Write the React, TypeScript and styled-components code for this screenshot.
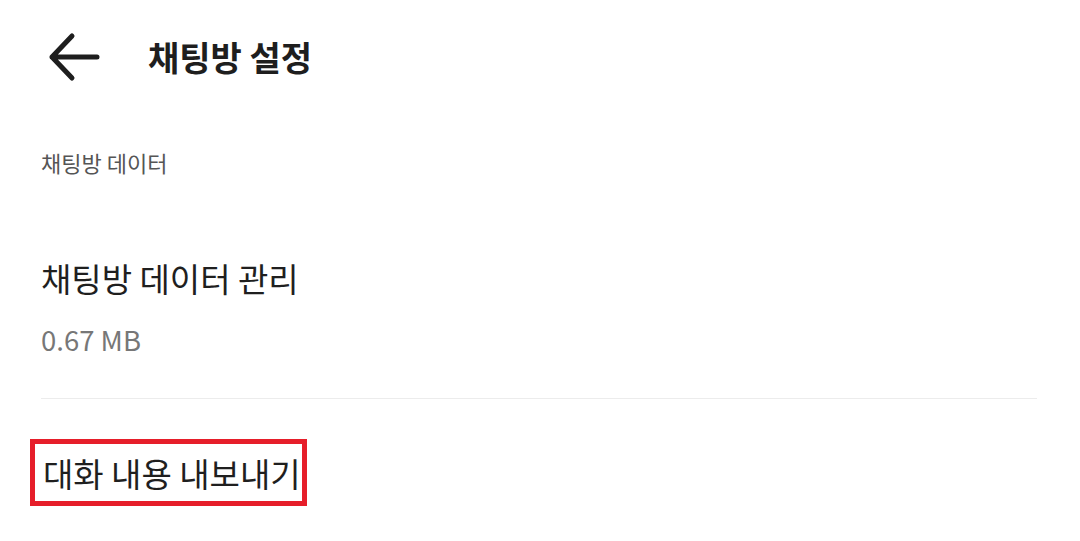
import React from "react";
import styled, { createGlobalStyle } from "styled-components";

const GlobalStyle = createGlobalStyle`
  body {
    margin: 0;
    background: #ffffff;
    font-family: "Noto Sans CJK KR", "Noto Sans", sans-serif;
  }
`;

const Screen = styled.div`
  width: 1080px;
  height: 541px;
  background: #ffffff;
  overflow: hidden;
`;

const Header = styled.header`
  height: 114px;
  display: flex;
  align-items: center;
  padding-left: 48px;
`;

const BackButton = styled.button`
  width: 52px;
  height: 52px;
  padding: 0;
  border: none;
  background: transparent;
  display: flex;
  margin-right: 48px;
`;

const Title = styled.h1`
  margin: 0;
  font-size: 34px;
  line-height: 44px;
  font-weight: 700;
  color: #1e1e1e;
`;

const Content = styled.main`
  padding: 34px 43px 0 41px;
`;

const SectionLabel = styled.div`
  font-size: 22px;
  line-height: 28px;
  color: #555555;
`;

const Item = styled.div<{ $gap: number }>`
  margin-top: ${(p) => p.$gap}px;
  display: flex;
  flex-direction: column;
`;

const ItemTitle = styled.div`
  font-size: 33px;
  line-height: 40px;
  color: #1f1f1f;
`;

const ItemSub = styled.div`
  margin-top: 23px;
  font-size: 27.5px;
  line-height: 36px;
  color: #777777;
`;

const Divider = styled.hr`
  margin: 41px 0 0;
  border: none;
  border-top: 1px solid #ececec;
`;

const Highlight = styled.div`
  margin: 40px 0 0 -11px;
  align-self: flex-start;
  display: inline-flex;
  align-items: center;
  height: 57px;
  padding: 0 1px 0 8px;
  border: 5px solid #e61e2a;
`;

const BackIcon = () => (
  <svg width="52" height="52" viewBox="0 0 52 52" fill="none">
    <path
      d="M4 26H49M24 5L4 26L24 47"
      stroke="#1e1e1e"
      strokeWidth="5"
      strokeLinecap="round"
      strokeLinejoin="round"
    />
  </svg>
);

const App: React.FC = () => {
  return (
    <Screen>
      <GlobalStyle />
      <Header>
        <BackButton aria-label="back">
          <BackIcon />
        </BackButton>
        <Title>채팅방 설정</Title>
      </Header>
      <Content>
        <SectionLabel>채팅방 데이터</SectionLabel>
        <Item $gap={82}>
          <ItemTitle>채팅방 데이터 관리</ItemTitle>
          <ItemSub>0.67 MB</ItemSub>
        </Item>
        <Divider />
        <Highlight>
          <ItemTitle>대화 내용 내보내기</ItemTitle>
        </Highlight>
      </Content>
    </Screen>
  );
};

export default App;
